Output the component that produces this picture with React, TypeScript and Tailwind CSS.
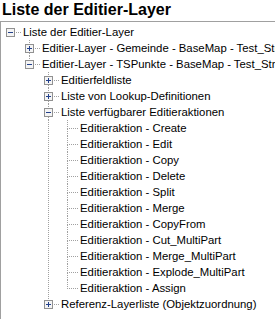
import React from 'react';

type Node = {
  label: string;
  level: number;
  kind: 'plus' | 'minus' | 'leaf';
  next: boolean;
  ancestors: number[];
  first?: boolean;
};

const actions = [
  'Create',
  'Edit',
  'Copy',
  'Delete',
  'Split',
  'Merge',
  'CopyFrom',
  'Cut_MultiPart',
  'Merge_MultiPart',
  'Explode_MultiPart',
  'Assign',
];

const rows: Node[] = [
  { label: 'Liste der Editier-Layer', level: 0, kind: 'minus', next: false, ancestors: [], first: true },
  { label: 'Editier-Layer - Gemeinde - BaseMap - Test_Stmk', level: 1, kind: 'plus', next: true, ancestors: [] },
  { label: 'Editier-Layer - TSPunkte - BaseMap - Test_Stmk', level: 1, kind: 'minus', next: false, ancestors: [] },
  { label: 'Editierfeldliste', level: 2, kind: 'plus', next: true, ancestors: [] },
  { label: 'Liste von Lookup-Definitionen', level: 2, kind: 'plus', next: true, ancestors: [] },
  { label: 'Liste verfügbarer Editieraktionen', level: 2, kind: 'minus', next: true, ancestors: [] },
  ...actions.map((a, i) => ({
    label: `Editieraktion - ${a}`,
    level: 3,
    kind: 'leaf' as const,
    next: i < actions.length - 1,
    ancestors: [2],
  })),
  { label: 'Referenz-Layerliste (Objektzuordnung)', level: 2, kind: 'plus', next: false, ancestors: [] },
];

const LINE = '#a0a0a0';

function Guides({ node }: { node: Node }) {
  const w = 22 + node.level * 19;
  const cx = 9.5 + node.level * 19;
  return (
    <svg width={w} height={16} className="shrink-0" shapeRendering="crispEdges">
      {node.ancestors.map((a) => (
        <line key={a} x1={9.5 + a * 19} y1={0} x2={9.5 + a * 19} y2={16} stroke={LINE} strokeDasharray="1 1" />
      ))}
      {!node.first && <line x1={cx} y1={0} x2={cx} y2={8} stroke={LINE} strokeDasharray="1 1" />}
      {node.next && <line x1={cx} y1={9} x2={cx} y2={16} stroke={LINE} strokeDasharray="1 1" />}
      {node.kind === 'leaf' ? (
        <line x1={cx - 0.5} y1={8.5} x2={w - 1} y2={8.5} stroke={LINE} strokeDasharray="1 1" />
      ) : (
        <>
          <line x1={cx + 5} y1={8.5} x2={w - 2} y2={8.5} stroke={LINE} strokeDasharray="1 1" />
          <rect x={cx - 4} y={4.5} width={8} height={8} fill="#f4f4f4" stroke="#919191" />
          <line x1={cx - 2.5} y1={8.5} x2={cx + 2.5} y2={8.5} stroke="#23418c" />
          {node.kind === 'plus' && <line x1={cx} y1={6} x2={cx} y2={11} stroke="#23418c" />}
        </>
      )}
    </svg>
  );
}

export default function App() {
  return (
    <div className="w-[275px] h-[319px] overflow-hidden bg-white text-black font-['Liberation_Sans',Arial,sans-serif]">
      <div className="h-[21px] pl-[2px] text-[16px] leading-[19px] font-bold whitespace-nowrap">
        Liste der Editier-Layer
      </div>
      <div className="h-[298px] border-t border-l border-[#a0a0a0] pt-[2px]">
        {rows.map((r, i) => (
          <div key={i} className="flex h-4 items-center whitespace-nowrap text-[11.35px] leading-4">
            <Guides node={r} />
            <span>{r.label}</span>
          </div>
        ))}
      </div>
    </div>
  );
}
